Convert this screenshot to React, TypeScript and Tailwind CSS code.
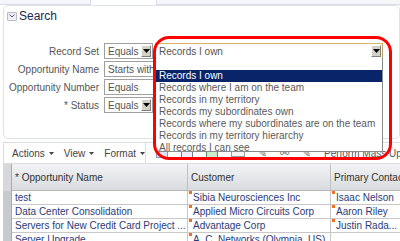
import { ReactNode } from "react";

const font = { fontFamily: '"Liberation Sans", Arial, sans-serif' };

function DropButton() {
  return (
    <span className="flex items-center justify-center w-[10px] h-[12px] bg-[#d4d0c8] border border-[#808080] border-t-white border-l-white shrink-0">
      <svg width="7" height="4" viewBox="0 0 7 4">
        <path d="M0 0h7L3.5 4z" fill="#000" />
      </svg>
    </span>
  );
}

function SelectBox({ text, width, button = false }: { text: string; width: number; button?: boolean }) {
  return (
    <div
      className="h-[16px] flex items-center justify-between border border-[#a0a0a0] bg-white pl-[3px] pr-[1px] text-[10px] text-[#555]"
      style={{ width }}
    >
      <span className="whitespace-nowrap overflow-hidden">{text}</span>
      {button && <DropButton />}
    </div>
  );
}

function Menu({ label }: { label: string }) {
  return (
    <span className="inline-flex items-center gap-[4px] whitespace-nowrap">
      {label}
      <svg width="5" height="3" viewBox="0 0 5 3">
        <path d="M0 0h5L2.5 3z" fill="#444" />
      </svg>
    </span>
  );
}

const formRows: { label: string; op: string; button: boolean }[] = [
  { label: "Record Set", op: "Equals", button: true },
  { label: "Opportunity Name", op: "Starts with", button: false },
  { label: "Opportunity Number", op: "Equals", button: false },
  { label: "* Status", op: "Equals", button: true },
];

const listItems = [
  "Records where I am on the team",
  "Records in my territory",
  "Records my subordinates own",
  "Records where my subordinates are on the team",
  "Records in my territory hierarchy",
  "All records I can see",
];

const rows = [
  { name: "test", customer: "Sibia Neurosciences Inc", contact: "Isaac Nelson" },
  { name: "Data Center Consolidation", customer: "Applied Micro Circuits Corp", contact: "Aaron Riley" },
  { name: "Servers for New Credit Card Project ...", customer: "Advantage Corp", contact: "Justin Rada..." },
  { name: "Server Upgrade", customer: "A. C. Networks (Olympia, US)", contact: "" },
];

function Cell({ children, width, flag = false }: { children: ReactNode; width: number; flag?: boolean }) {
  return (
    <div
      className="relative h-[13px] border-r border-[#c8c8c8] pl-[3px] text-[10px] leading-[14px] text-[#2b3b78] whitespace-nowrap overflow-hidden"
      style={{ width }}
    >
      {flag && <span className="absolute left-[1px] top-0 w-[3px] h-[3px] bg-[#f07020]" />}
      <span className={flag ? "pl-[2px]" : ""}>{children}</span>
    </div>
  );
}

export default function App() {
  return (
    <div className="relative w-[400px] h-[241px] overflow-hidden bg-white" style={font}>
      {/* tab strip */}
      <div className="h-[5px] flex">
        <div className="w-[90px] border-b border-[#d8dde6] bg-[#f4f6fa]" />
        <div className="w-[67px] border-x border-[#d8dde6] bg-white" />
        <div className="flex-1 border-b border-[#d8dde6] bg-[#f4f6fa]" />
      </div>

      {/* search panel */}
      <div className="ml-[3px] h-[134px] border border-[#dde1e8] rounded-[5px] bg-white">
        <div className="flex items-center gap-[2px] pl-[3px] pt-[3px] h-[17px]">
          <span className="flex items-center justify-center w-[10px] h-[9px] border border-[#b8bcc4] bg-[#eef0f4] rounded-[1px]">
            <svg width="6" height="4" viewBox="0 0 6 4">
              <path d="M0.5 0.5L3 3L5.5 0.5" stroke="#556" strokeWidth="1" fill="none" />
            </svg>
          </span>
          <span className="text-[12px] text-[#202850]">Search</span>
        </div>

        <div className="mt-[20px] flex flex-col gap-[2px]">
          {formRows.map((r) => (
            <div key={r.label} className="flex items-center h-[16px]">
              <div className="w-[100px] pr-[5px] text-right text-[10px] text-[#555] whitespace-nowrap">
                {r.label}
              </div>
              <SelectBox text={r.op} width={r.button ? 49 : 60} button={r.button} />
              {r.label === "Record Set" && (
                <div className="ml-[2px] w-[228px] h-[16px] flex items-center justify-between border border-[#b9a060] border-t-[#d8b468] bg-white pl-[3px] pr-[1px] text-[10px] text-[#555]">
                  <span>Records I own</span>
                  <DropButton />
                </div>
              )}
            </div>
          ))}
        </div>
      </div>

      {/* toolbar */}
      <div className="mt-[3px] ml-[3px] h-[22px] flex items-center border border-r-0 border-[#dcdcdc] text-[10px] text-[#444]">
        <div className="w-[143px] flex items-center gap-[10px] pl-[8px] border-r border-[#dcdcdc] h-full">
          <Menu label="Actions" />
          <Menu label="View" />
          <Menu label="Format" />
        </div>
        <div className="flex items-center gap-[13px] pl-[10px] h-full text-[#777]">
          <span className="w-[12px] h-[10px] border border-[#8899bb] bg-[#dde6f4]" />
          <span className="w-[12px] h-[10px] border border-[#778] bg-[#eef]" />
          <span className="w-[12px] h-[10px] border border-[#586] bg-[#cec]" />
          <span className="w-[14px] h-[8px] border border-[#999] bg-[#f4f4f4]" />
          <span className="text-[11px]">✎</span>
          <span className="text-[11px]">⚯</span>
          <span className="text-[11px]">✎</span>
          <span className="whitespace-nowrap text-[10px] text-[#555]">Perform Mass Update</span>
        </div>
      </div>

      {/* table */}
      <div className="ml-[3px] flex">
        <div className="w-[9px] shrink-0 bg-[#c8cacd] border-r border-[#aaa]">
          <div className="h-[27px] bg-[#d6d8db]" />
        </div>
        <div className="flex flex-col">
          <div className="flex h-[27px] bg-gradient-to-b from-[#f2f3f5] to-[#d9dcdf] border-b border-[#b8b8b8] text-[10px] text-[#333]">
            <div className="w-[176px] border-r border-[#c0c0c0] flex items-center pl-[3px]">* Opportunity Name</div>
            <div className="w-[143px] border-r border-[#c0c0c0] flex items-center pl-[3px]">Customer</div>
            <div className="w-[80px] flex items-center pl-[3px] whitespace-nowrap">Primary Contact</div>
          </div>
          {rows.map((r) => (
            <div key={r.name} className="flex border-b border-[#c8c8c8] bg-white">
              <Cell width={176}>{r.name}</Cell>
              <Cell width={143} flag>{r.customer}</Cell>
              <Cell width={80} flag={r.contact !== ""}>{r.contact}</Cell>
            </div>
          ))}
        </div>
      </div>

      {/* open dropdown list */}
      <div className="absolute left-[155px] top-[58px] w-[228px] h-[94px] bg-white border border-[#8a8a8a] border-t-0 text-[10px] leading-[12px] text-[#5a5a5a]">
        <div className="h-[12px]" />
        <div className="h-[12px] bg-[#0a246a] text-white pl-[3px]">Records I own</div>
        {listItems.map((t) => (
          <div key={t} className="h-[12px] pl-[3px] whitespace-nowrap">{t}</div>
        ))}
      </div>

      {/* red highlight */}
      <div className="absolute left-[153px] top-[36px] w-[239px] h-[124px] border-[3px] border-[#ff0000] rounded-[16px]" />
    </div>
  );
}
